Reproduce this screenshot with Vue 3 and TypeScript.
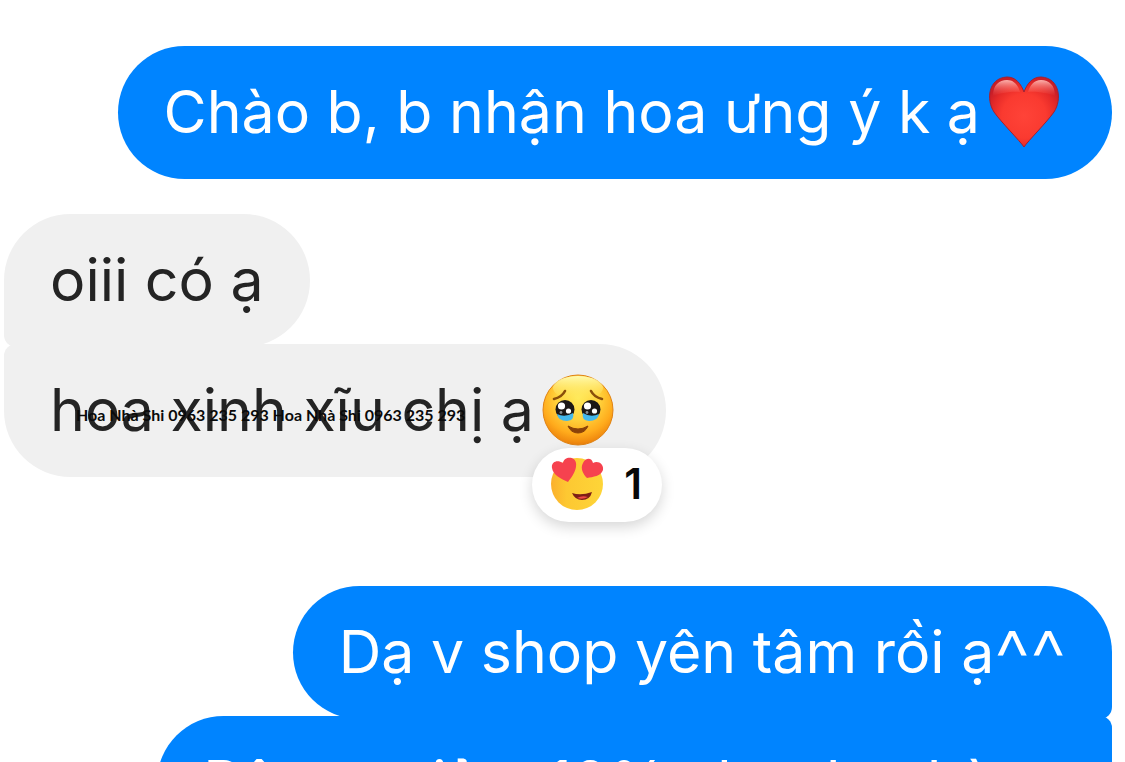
<script setup lang="ts">
interface Message {
  id: number
  side: 'sent' | 'received'
  text: string
  smile?: string
  emoji?: 'heart' | 'tearful'
  position: 'single' | 'first' | 'last'
  stamp?: string
  reactions?: number
}

const messages: Message[] = [
  { id: 1, side: 'sent', text: 'Chào b, b nhận hoa ưng ý k ạ', emoji: 'heart', position: 'single' },
  { id: 2, side: 'received', text: 'oiii có ạ', position: 'first' },
  {
    id: 3,
    side: 'received',
    text: 'hoa xinh xĩu chị ạ',
    emoji: 'tearful',
    position: 'last',
    stamp: 'Hoa Nhà Shi 0963 235 293 Hoa Nhà Shi 0963 235 293',
    reactions: 1,
  },
  { id: 4, side: 'sent', text: 'Dạ v shop yên tâm rồi ạ', smile: '^^', position: 'first' },
  { id: 5, side: 'sent', text: 'Bên m giảm 10% cho đơn hàng', position: 'last' },
]
</script>

<template>
  <main class="chat">
    <div
      v-for="message in messages"
      :key="message.id"
      class="bubble"
      :class="[message.side, message.position, { 'with-emoji': message.emoji }]"
    >
      <p class="text">{{ message.text }}<span v-if="message.smile" class="smile">{{ message.smile }}</span></p>

      <svg v-if="message.emoji === 'heart'" class="emoji" viewBox="0 0 72 72" role="img" aria-label="Red heart">
        <defs>
          <radialGradient id="heartFill" cx="36" cy="40" r="40" gradientUnits="userSpaceOnUse">
            <stop offset="0" stop-color="#ff4338" />
            <stop offset="0.55" stop-color="#fa3a30" />
            <stop offset="0.8" stop-color="#e52a28" />
            <stop offset="1" stop-color="#c81e28" />
          </radialGradient>
          <linearGradient id="heartShine" x1="0" y1="0" x2="0" y2="1">
            <stop offset="0" stop-color="#ffb9b3" stop-opacity="0.95" />
            <stop offset="1" stop-color="#ff6258" stop-opacity="0" />
          </linearGradient>
        </defs>
        <path d="M36 71C32 65 13 46 6 36C-2 24 0 2 19 1C28 1 33 8 36 16C39 8 44 1 53 1C72 2 74 24 66 36C59 46 40 65 36 71Z" fill="url(#heartFill)" stroke="#a5202f" stroke-width="1" />
        <path d="M5 20C5 9 11 4 19 4C26 4 30 9 32 16C25 15 12 17 5 20ZM67 20C67 9 61 4 53 4C46 4 42 9 40 16C47 15 60 17 67 20Z" fill="url(#heartShine)" />
      </svg>

      <svg v-if="message.emoji === 'tearful'" class="emoji" viewBox="0 0 72 72" role="img" aria-label="Face holding back tears">
        <defs>
          <radialGradient id="faceFill" cx="36" cy="24" r="48" gradientUnits="userSpaceOnUse">
            <stop offset="0" stop-color="#ffe95a" />
            <stop offset="0.45" stop-color="#ffd23c" />
            <stop offset="0.75" stop-color="#ffab1c" />
            <stop offset="1" stop-color="#ea7d0a" />
          </radialGradient>
          <linearGradient id="faceShine" x1="0" y1="0" x2="0" y2="1">
            <stop offset="0" stop-color="#fffbb0" />
            <stop offset="1" stop-color="#ffec62" stop-opacity="0" />
          </linearGradient>
        </defs>
        <circle cx="36" cy="36" r="35" fill="url(#faceFill)" stroke="#e08314" stroke-width="1" />
        <ellipse cx="36" cy="14" rx="25" ry="12" fill="url(#faceShine)" />
        <path d="M12 25Q20 23 23 17M60 25Q52 23 49 17" fill="none" stroke="#8a4f0a" stroke-width="2.6" stroke-linecap="round" />
        <circle cx="23" cy="35.5" r="9.5" fill="#1b1716" />
        <circle cx="49" cy="35.5" r="9.5" fill="#1b1716" />
        <path d="M15 40Q23 44 31 39Q33 46 25 47Q16 47 15 40ZM41 39Q49 44 57 40Q56 47 47 47Q39 46 41 39Z" fill="#44b8ec" />
        <g fill="#ffffff">
          <circle cx="19.5" cy="32" r="3.6" />
          <circle cx="26.5" cy="37" r="2.6" />
          <circle cx="45.5" cy="32" r="3.6" />
          <circle cx="52.5" cy="37" r="2.6" />
        </g>
        <g fill="#8b9094">
          <circle cx="19" cy="38.5" r="1.4" />
          <circle cx="45" cy="38.5" r="1.4" />
        </g>
        <path d="M26 52Q36 58 46 52Q43 59 36 59Q29 59 26 52Z" fill="#8a4209" stroke="#8a4209" stroke-width="1" stroke-linejoin="round" />
      </svg>

      <span v-if="message.stamp" class="stamp">{{ message.stamp }}</span>

      <button v-if="message.reactions" type="button" class="reaction" aria-label="Reactions: 1">
        <svg class="reaction-face" viewBox="0 0 54 54" aria-hidden="true">
          <defs>
            <linearGradient id="loveFill" x1="0" y1="0" x2="1" y2="0">
              <stop offset="0" stop-color="#fbb02c" />
              <stop offset="0.3" stop-color="#fdc832" />
              <stop offset="1" stop-color="#fed538" />
            </linearGradient>
          </defs>
          <circle cx="27" cy="27" r="26" fill="url(#loveFill)" />
          <path d="M18 25C11 22 3 18 2 11C1 5 7 2 13 6C14 -1 25 -1 26 6C27 13 22 20 18 25Z" fill="#f6424f" />
          <path d="M37 21C33 17 30 11 33 6C36 0 42 1 43 6C48 3 54 7 53 13C51 19 43 20 37 21Z" fill="#f6424f" />
          <path d="M22 36Q31 39 42 35Q40 43 32 43Q25 43 22 36Z" fill="#7d1f16" />
          <path d="M27 41Q32 38 38 40Q33 43 27 41Z" fill="#ef4a45" />
        </svg>
        <span class="count">{{ message.reactions }}</span>
      </button>
    </div>
  </main>
</template>

<style>
body {
  margin: 0;
  background: #ffffff;
}
</style>

<style scoped>
.chat {
  display: flex;
  flex-direction: column;
  box-sizing: border-box;
  height: 100vh;
  overflow: hidden;
  padding: 46px 13px 0 4px;
  background: #ffffff;
  font-family: Inter, "Noto Sans", sans-serif;
}

.bubble {
  position: relative;
  display: flex;
  flex: none;
  align-items: center;
  gap: 8px;
  padding: 30px 46px 31px;
  border-radius: 67px;
}

.with-emoji {
  padding-right: 52px;
}

.sent {
  align-self: flex-end;
  background: #0084ff;
  color: #ffffff;
}

.received {
  align-self: flex-start;
  background: #f0f0f0;
  color: #242424;
}

.first {
  margin-top: 35px;
}

.last {
  margin-top: -3px;
}

.received.first {
  border-bottom-left-radius: 12px;
}

.received.last {
  border-top-left-radius: 12px;
}

.sent.first {
  margin-top: 109px;
  border-bottom-right-radius: 12px;
}

.sent.last {
  border-top-right-radius: 12px;
}

.text {
  max-height: 72px;
  margin: 0;
  font-size: 59px;
  line-height: 72px;
  white-space: nowrap;
}

.smile {
  font-size: 80px;
  font-weight: 300;
  line-height: 84px;
  vertical-align: text-top;
}

.emoji {
  flex: none;
  width: 72px;
  height: 72px;
}

.stamp {
  position: absolute;
  top: 61px;
  left: 72px;
  color: #0a0a0a;
  font-family: Lato, Inter, sans-serif;
  font-size: 16px;
  font-weight: 700;
  line-height: 20px;
  white-space: nowrap;
}

.reaction {
  position: absolute;
  right: 4px;
  bottom: -45px;
  display: flex;
  align-items: center;
  justify-content: space-between;
  width: 130px;
  height: 74px;
  padding: 0 20px 2px 18px;
  border: 0;
  border-radius: 37px;
  background: #ffffff;
  box-shadow: 0 5px 14px rgba(0, 0, 0, 0.16);
  color: #080808;
  font-family: inherit;
  cursor: pointer;
}

.reaction-face {
  width: 54px;
  height: 54px;
}

.count {
  font-size: 42px;
  font-weight: 600;
  line-height: 48px;
}
</style>
